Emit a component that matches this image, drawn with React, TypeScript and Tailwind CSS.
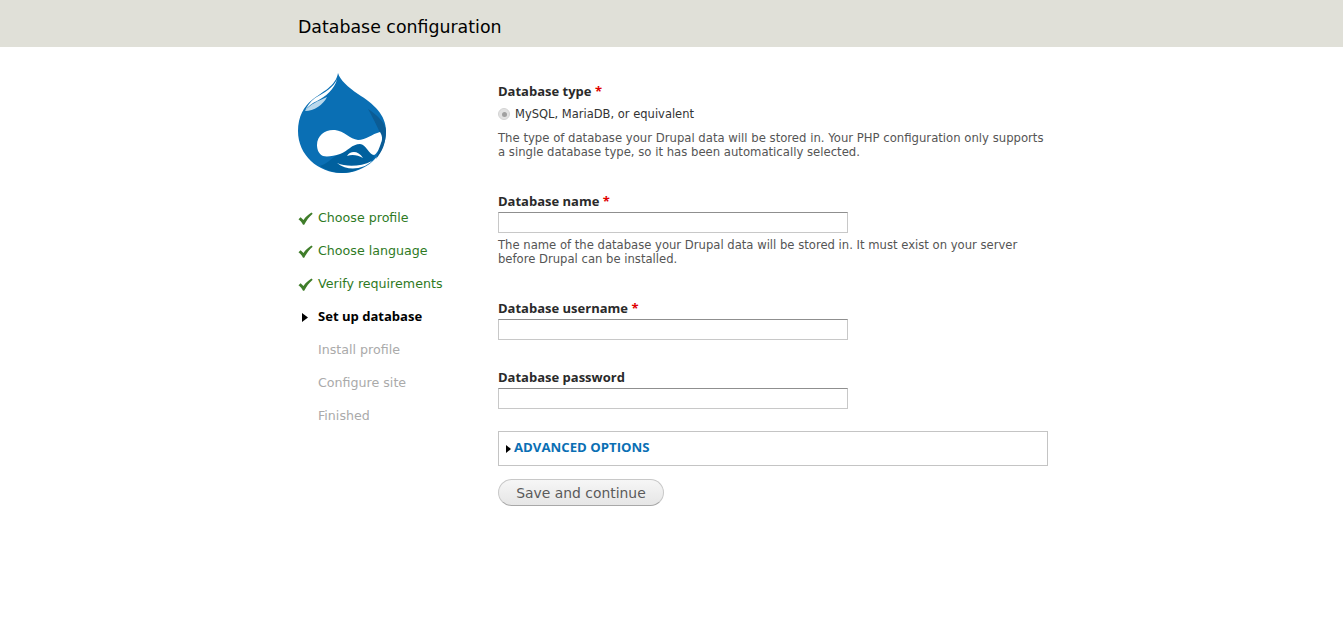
const font = "[font-family:'DejaVu_Sans',sans-serif]";

function Check() {
  return (
    <svg width="15" height="13" viewBox="0 0 15 13" className="shrink-0">
      <path d="M0.5 7.2 L2.6 5.2 L5.5 8 C7.5 5 10 2.6 13.5 0.5 L14.7 1.8 C11 5 8.5 8.5 6.2 12.8 L5 12.8 C4 10.5 2.5 8.7 0.5 7.2 Z" fill="#3f7d2a" />
    </svg>
  );
}

function Arrow() {
  return (
    <svg width="6" height="9" viewBox="0 0 6 9" className="shrink-0">
      <path d="M0 0 L6 4.5 L0 9 Z" fill="#000" />
    </svg>
  );
}

function Drop() {
  const outline =
    "M40 0 C42 7 50 14 60 21 C76 31 88 42 88 58 C88 82 68 100 44 100 C20 100 0 82 0 58 C0 44 6 33 14 27 C24 19 38 13 40 0 Z";
  return (
    <svg width="88" height="100" viewBox="0 0 88 100" className="block">
      <path d={outline} fill="#0a6fb4" />
      {/* darker right shoulder */}
      <path d="M70 36 C78 41 88 50 88 58 C88 70 84 79 78 86 L84 66 C82 58 76 47 70 36 Z" fill="#0b5c95" />
      {/* dark lower face */}
      <path d="M36 84 C44 80 52 72 62 71 C68 72 72 80 77 84 C68 94 56 100 44 100 C36 100 28 97 22 93 C28 91 32 87 36 84 Z" fill="#00609e" />
      {/* highlight along the edge */}
      <path d="M7 38 C12 31 20 28 29 24 C25 32 16 38 7 38 Z" fill="#b9d8ec" />
      <path d="M39 6 C36 14 26 20 17 25 C12 29 9 33 7 38 C10 33 14 30 19 28 C27 24 37 16 39 6 Z" fill="#ffffff" />
      {/* eyes */}
      <path d="M19 72 C19 62 28 56 37 57 C46 58 52 66 60 67 C68 67 74 61 82 59 C84 62 85 66 83 70 C81 76 79 81 76 82 C71 82 68 71 62 71 C54 71 50 78 42 81 C36 83 29 84 25 83 C21 81 19 77 19 72 Z" fill="#ffffff" />
      {/* mouth and nose */}
      <path d="M39 90 C48 94 62 94 74 88 C66 96 50 99 39 90 Z" fill="#ffffff" />
      <path d="M49 83 C52 78 60 77 65 85 C60 82 54 81 49 83 Z" fill="#ffffff" />
    </svg>
  );
}

function Step({ kind, label }: { kind: "done" | "active" | "todo"; label: string }) {
  const color =
    kind === "done"
      ? "text-[#2f7a1f] text-[12.65px]"
      : kind === "active"
        ? "text-black font-bold text-[13.05px] -mt-[1px] [font-family:'Open_Sans',sans-serif]"
        : "text-[#aaaaaa] text-[12.65px]";
  return (
    <li className="flex items-center h-[33px]">
      <span className="w-[20px] flex items-center">
        {kind === "done" && <span className="mt-[-1px] flex"><Check /></span>}
        {kind === "active" && <span className="ml-[4px] flex"><Arrow /></span>}
      </span>
      <span className={color}>{label}</span>
    </li>
  );
}

function Label({ text, required = true }: { text: string; required?: boolean }) {
  return (
    <div className="text-[13px] leading-[16px] pb-[2px] font-bold text-[#2a2a2a] [font-family:'Open_Sans',sans-serif]">
      {text}
      {required && <span className="text-[#e00000]"> *</span>}
    </div>
  );
}

function Input() {
  return (
    <div className="h-[21px] w-[350px] border border-[#c8c8c8] border-t-[#8f8f8f] bg-white" />
  );
}

export default function App() {
  return (
    <div className={`min-h-[632px] bg-white ${font}`}>
      <header className="h-[47px] bg-[#e0e0d8] flex items-center pl-[298px] pt-[8px]">
        <h1 className="text-[17.37px] font-normal text-black">Database configuration</h1>
      </header>
      <div className="flex pl-[298px]">
        <aside className="w-[200px] shrink-0 pt-[26px]">
          <Drop />
          <ul className="mt-[29px]">
            <Step kind="done" label="Choose profile" />
            <Step kind="done" label="Choose language" />
            <Step kind="done" label="Verify requirements" />
            <Step kind="active" label="Set up database" />
            <Step kind="todo" label="Install profile" />
            <Step kind="todo" label="Configure site" />
            <Step kind="todo" label="Finished" />
          </ul>
        </aside>
        <main className="w-[550px] pt-[36px]">
          <Label text="Database type" />
          <div className="flex items-center h-[18px] mt-[5px]">
            <span className="w-[12px] h-[12px] -mt-[2px] rounded-full bg-[#e2e2e2] border border-[#d4d4d4] flex items-center justify-center">
              <span className="w-[5px] h-[5px] rounded-full bg-[#a0a0a0]" />
            </span>
            <span className="ml-[5px] text-[11.5px] text-[#333333]">MySQL, MariaDB, or equivalent</span>
          </div>
          <p className="mt-[7px] text-[11.67px] leading-[14px] text-[#555555]">
            The type of database your Drupal data will be stored in. Your PHP configuration only supports
            <br />
            a single database type, so it has been automatically selected.
          </p>

          <div className="mt-[34px]"><Label text="Database name" /></div>
          <div className="mt-[1px]"><Input /></div>
          <p className="mt-[5px] text-[11.62px] leading-[14px] text-[#555555]">
            The name of the database your Drupal data will be stored in. It must exist on your server
            <br />
            before Drupal can be installed.
          </p>

          <div className="mt-[34px]"><Label text="Database username" /></div>
          <div className="mt-[1px]"><Input /></div>

          <div className="mt-[29px]"><Label text="Database password" required={false} /></div>
          <div className="mt-[1px]"><Input /></div>

          <div className="mt-[22px] h-[35px] border border-[#c4c4c4] flex items-center pl-[7px]">
            <svg width="5" height="8" viewBox="0 0 5 8" className="mt-[1px]">
              <path d="M0 0 L5 4 L0 8 Z" fill="#000" />
            </svg>
            <span className="ml-[3px] -mt-[2px] text-[13.2px] font-bold text-[#0a6fb4] [font-family:'Open_Sans',sans-serif]">ADVANCED OPTIONS</span>
          </div>

          <button className="mt-[13px] block h-[27px] w-[166px] pt-[2px] rounded-[14px] border border-[#c8c8c8] border-b-[#a8a8a8] bg-gradient-to-b from-[#f6f6f6] to-[#e6e6e6] text-[13.9px] text-[#5a5a5a]">
            Save and continue
          </button>
        </main>
      </div>
    </div>
  );
}
